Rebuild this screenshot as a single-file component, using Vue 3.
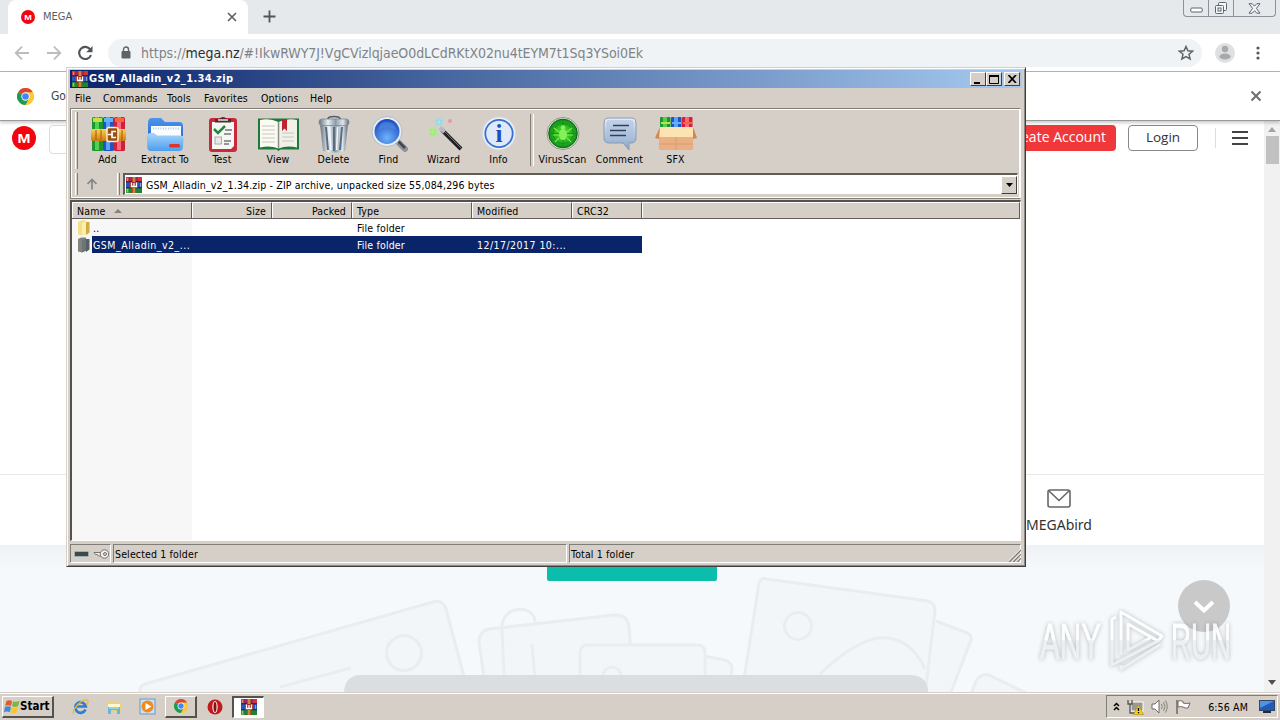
<template>
  <div class="desktop">
    <!-- Shared icon shapes -->
    <svg class="defs" width="0" height="0">
      <defs>
        <linearGradient id="steel" x1="0" x2="1" y1="0" y2="0">
          <stop offset="0" stop-color="#66727e" />
          <stop offset="0.3" stop-color="#e8eef3" />
          <stop offset="0.55" stop-color="#8c9dac" />
          <stop offset="0.8" stop-color="#dfe7ed" />
          <stop offset="1" stop-color="#5d6976" />
        </linearGradient>
        <linearGradient id="folderBlue" x1="0" x2="0" y1="0" y2="1">
          <stop offset="0" stop-color="#a9d6fb" />
          <stop offset="1" stop-color="#4d9eee" />
        </linearGradient>
        <linearGradient id="folderBack" x1="0" x2="0" y1="0" y2="1">
          <stop offset="0" stop-color="#4c96ee" />
          <stop offset="1" stop-color="#2f6fd2" />
        </linearGradient>
        <linearGradient id="gold" x1="0" x2="0" y1="0" y2="1">
          <stop offset="0" stop-color="#fbd34f" />
          <stop offset="1" stop-color="#d07a14" />
        </linearGradient>
        <radialGradient id="lens" cx="0.5" cy="0.75" r="0.75">
          <stop offset="0" stop-color="#6db4fa" />
          <stop offset="1" stop-color="#1c48bd" />
        </radialGradient>
        <radialGradient id="scan" cx="0.5" cy="0.5" r="0.55">
          <stop offset="0" stop-color="#58ee2e" />
          <stop offset="1" stop-color="#0b8617" />
        </radialGradient>
        <radialGradient id="sparkGreen">
          <stop offset="0" stop-color="#7be84a" />
          <stop offset="1" stop-color="#b9f0a1" stop-opacity="0" />
        </radialGradient>
        <radialGradient id="sparkCyan">
          <stop offset="0" stop-color="#4fcdec" />
          <stop offset="1" stop-color="#a9e5ee" stop-opacity="0" />
        </radialGradient>
        <linearGradient id="bubble" x1="0" x2="0" y1="0" y2="1">
          <stop offset="0" stop-color="#e4edf7" />
          <stop offset="1" stop-color="#86a2c6" />
        </linearGradient>
        <linearGradient id="mark" gradientUnits="userSpaceOnUse" x1="0" x2="0" y1="612" y2="672">
          <stop offset="0.46" stop-color="#fff" />
          <stop offset="0.48" stop-color="#eceff0" />
        </linearGradient>
      </defs>
      <symbol id="rar" viewBox="0 0 16 16">
        <rect x="0" y="0" width="16" height="5" fill="#9c2460" />
        <rect x="0" y="5" width="16" height="6" fill="#2b53bd" />
        <rect x="0" y="11" width="16" height="5" fill="#228233" />
        <rect x="0" y="0" width="3" height="5" fill="#c93b45" />
        <rect x="12" y="0" width="4" height="5" fill="#d72f35" />
        <rect x="0" y="11" width="3" height="5" fill="#45a046" />
        <path d="M0 4.800h16M0 10.800h16" stroke="#1c1e3b" stroke-width="1" />
        <path d="M1.500 1v3M1.500 12v3M14.500 6v4" stroke="#d9d4c5" stroke-width=".8" opacity=".7" />
        <rect x="6" y="0" width="4" height="16" fill="#a8551d" />
        <path d="M8 0v16" stroke="#d89a55" stroke-width="1.400" />
        <rect x="4" y="5" width="8" height="6" fill="#a02c26" />
        <path d="M5.500 5.500v4h5v-4M8 6v3.500" stroke="#fff" stroke-width="1.300" fill="none" />
      </symbol>
      <symbol id="chrome" viewBox="0 0 16 16">
        <circle cx="8" cy="8" r="8" fill="#fcc934" />
        <path d="M8 8L1.070 4A8 8 0 0 1 14.930 4z" fill="#dc4437" />
        <path d="M8 8L1.070 4A8 8 0 0 0 8 16l3.500-6z" fill="#1a9c57" />
        <path d="M14.930 4H8v4l3.500 2L8 16A8 8 0 0 0 14.930 4z" fill="#fcc934" />
        <circle cx="8" cy="8" r="3.900" fill="#fff" />
        <circle cx="8" cy="8" r="3.100" fill="#4285f4" />
      </symbol>
      <symbol id="mega" viewBox="0 0 24 24">
        <circle cx="12" cy="12" r="12" fill="#f2050c" />
        <text x="5.500" y="16.500" textLength="13" lengthAdjust="spacingAndGlyphs" font-family="Liberation Sans" font-weight="700" font-size="13" fill="#fff">M</text>
      </symbol>
    </svg>

    <!-- Browser -->
    <div class="browser">
      <div class="tab-strip">
        <div class="tab">
          <svg width="14" height="14"><use href="#mega" /></svg>
          <span class="tab-title">MEGA</span>
          <svg class="tab-close" width="10" height="10" viewBox="0 0 10 10"><path d="M1 1l8 8M9 1L1 9" stroke="#5f6368" stroke-width="1.700" /></svg>
        </div>
        <svg class="new-tab" width="13" height="13" viewBox="0 0 13 13"><path d="M6.500 .5v12M.5 6.500h12" stroke="#50555a" stroke-width="1.800" /></svg>
        <div class="win-controls">
          <span class="wc"><svg width="13" height="6" viewBox="0 0 13 6"><rect x=".8" y="1" width="11.400" height="4" rx="1" fill="#fff" stroke="#5a6672" /></svg></span>
          <span class="wc"><svg width="14" height="14" viewBox="0 0 14 14" fill="#f4f6f8" stroke="#5a6672"><rect x="4.500" y="1.500" width="8" height="8" rx="1" /><rect x="1.500" y="4.500" width="8" height="8" rx="1" /><rect x="4" y="7" width="3" height="3" /></svg></span>
          <span class="wc wide"><svg width="13" height="11" viewBox="0 0 13 11"><path d="M1 .7h3.200l2.300 2.500L8.800.7H12L8.400 5.400 12 10.200H8.800L6.500 7.700l-2.300 2.500H1l3.600-4.800z" fill="#f4f6f8" stroke="#5a6672" /></svg></span>
        </div>
      </div>

      <div class="nav-bar">
        <svg class="nav-icons" width="86" height="18" viewBox="0 0 86 18" fill="none">
          <path d="M15 9H2M8 2.700L1.700 9 8 15.300" stroke="#babcbe" stroke-width="1.800" />
          <path d="M33 9h13M40 2.700L46.300 9 40 15.300" stroke="#babcbe" stroke-width="1.800" />
          <path d="M76.300 5.500A6.100 6.100 0 1 0 77 11" stroke="#505458" stroke-width="2.100" />
          <path d="M78.500 2v6.300h-6.300z" fill="#505458" />
        </svg>
        <div class="omnibox">
          <svg width="10" height="13" viewBox="0 0 10 13"><rect x=".5" y="5" width="9" height="7.500" rx="1" fill="#5f6368" /><path d="M2.500 5V3.500a2.500 2.500 0 0 1 5 0V5" stroke="#5f6368" stroke-width="1.400" fill="none" /></svg>
          <span class="url">https://<b>mega.nz</b>/#!IkwRWY7J!VgCVizlqjaeO0dLCdRKtX02nu4tEYM7t1Sq3YSoi0Ek</span>
          <svg class="star" width="16" height="16" viewBox="0 0 16 16"><path d="M8 1.500l1.900 4.300 4.700.4-3.600 3.100 1.100 4.600L8 11.500l-4.100 2.400L5 9.300 1.400 6.200l4.700-.4z" fill="none" stroke="#5f6368" stroke-width="1.500" /></svg>
        </div>
        <svg class="avatar" width="20" height="20" viewBox="0 0 20 20"><circle cx="10" cy="10" r="10" fill="#dfe0e2" /><circle cx="10" cy="6" r="3.200" fill="#a7a9ab" /><ellipse cx="10" cy="13.500" rx="5.600" ry="3" fill="#a7a9ab" /></svg>
        <svg class="dots" width="4" height="14" viewBox="0 0 4 14" fill="#55595d"><circle cx="2" cy="2" r="1.600" /><circle cx="2" cy="7" r="1.600" /><circle cx="2" cy="12" r="1.600" /></svg>
      </div>

      <div class="info-bar">
        <svg width="17" height="17"><use href="#chrome" /></svg>
        <span class="info-text">Go</span>
        <svg class="info-close" width="12" height="12" viewBox="0 0 12 12"><path d="M1.500 1.500l9 9M10.500 1.500l-9 9" stroke="#6b6e71" stroke-width="2" /></svg>
      </div>

      <div class="viewport">
        <div class="page">
          <div class="page-head">
            <svg width="24" height="24"><use href="#mega" /></svg>
            <div class="search"></div>
            <div class="create">Create Account</div>
            <div class="login">Login</div>
            <div class="divider"></div>
            <svg class="burger" width="16" height="14" viewBox="0 0 16 14"><path d="M0 1h16M0 7h16M0 13h16" stroke="#444" stroke-width="1.800" /></svg>
          </div>
          <div class="products">
            <div class="product">
              <svg width="24" height="19" viewBox="0 0 24 19" fill="none" stroke="#666" stroke-width="1.600"><rect x="1" y="1" width="22" height="17" rx="2" /><path d="M2 2l10 9.500L22 2" /></svg>
              <span>MEGAbird</span>
            </div>
          </div>
          <div class="promo">
            <svg class="art" width="1264" height="147" viewBox="0 545 1264 147">
              <g fill="#f2f6f9" stroke="#e9edf0" stroke-width="3" stroke-linejoin="round">
                <path d="M140 700V690Q140 686 145 684L433 602Q443 599 446 609L468 692" />
                <circle cx="404" cy="653" r="17.500" />
                <path d="M280 687L351 668" fill="none" />
                <path d="M486 692L479 642Q479 631 489 629L614 615Q627 614 629 626L634 692" />
                <path d="M505 692L502 630C500 604 535 604 535 622M532 644L536 692" fill="none" />
                <path d="M704 656L725 660Q731 662 732 668L730 692H704" />
                <rect x="580" y="645" width="125" height="60" rx="7" />
                <circle cx="612" cy="676" r="9" />
                <path d="M936 621L967 633Q972 635 971 640L948 700H925" />
                <path d="M742 692L759 583Q761 577 767 579L928 601Q936 604 935 611L925 695" />
                <circle cx="798" cy="626" r="13.500" />
                <path d="M820 674Q862 634 888 638Q912 641 925 669" fill="none" />
                <path d="M970 697L976 681Q981 673 989 675L1032 696" />
              </g>
              <path d="M344 692Q345 675 361 675H911Q928 676 928 692z" fill="#dadee1" />
            </svg>
            <div class="cta"></div>
            <svg class="scroll-down" width="52" height="52" viewBox="0 0 52 52"><circle cx="26" cy="26" r="26" fill="#c9c9ca" /><path d="M17 22l9 8.500 9-8.500" fill="none" stroke="#fff" stroke-width="4" /></svg>
          </div>
        </div>
        <div class="scrollbar">
          <svg width="8" height="5" viewBox="0 0 8 5"><path d="M0 5l4-5 4 5z" fill="#a3a3a3" /></svg>
          <div class="thumb"></div>
          <svg class="down" width="8" height="5" viewBox="0 0 8 5"><path d="M0 0h8L4 5z" fill="#505050" /></svg>
        </div>
      </div>
    </div>

    <svg class="watermark" width="204" height="72" viewBox="1034 605 204 72">
      <g fill="url(#mark)" stroke="url(#mark)" stroke-width="1">
        <text x="1040" y="659" textLength="61" lengthAdjust="spacingAndGlyphs" class="wm">ANY</text>
        <text x="1171" y="659" textLength="60" lengthAdjust="spacingAndGlyphs" class="wm">RUN</text>
      </g>
      <g fill="none" stroke="url(#mark)" stroke-width="3" stroke-linejoin="round">
        <path d="M1121 655V612L1162 636L1158 641L1128 624V650L1150 638" />
        <path d="M1116 617L1112 619V665L1158 641M1121 665V669L1161 644" />
      </g>
    </svg>

    <!-- Archive window -->
    <div class="window">
      <div class="title-bar">
        <svg width="16" height="16"><use href="#rar" /></svg>
        <span class="title">GSM_Alladin_v2_1.34.zip</span>
        <span class="cap"><svg width="10" height="9" viewBox="0 0 10 9"><path d="M1 8h6" stroke="#000" stroke-width="2" /></svg></span>
        <span class="cap"><svg width="10" height="9" viewBox="0 0 10 9"><path d="M.5 1v7.500h9V1" stroke="#000" fill="none" /><path d="M0 1h10" stroke="#000" stroke-width="2" /></svg></span>
        <span class="cap close"><svg width="9" height="8" viewBox="0 0 9 8"><path d="M.5 0l7.500 8M8 0L.5 8" stroke="#000" stroke-width="1.700" /></svg></span>
      </div>
      <div class="menu">
        <span v-for="m in menu" :key="m.label" :style="{ width: m.width + 'px' }">{{ m.label }}</span>
      </div>

      <div class="rebar">
        <div class="toolbar">
          <i class="grip"></i>
          <div v-for="t in tools" :key="t.label" class="tool" :class="{ split: t.split }" :style="{ width: t.width + 'px' }">
            <svg width="44" height="38" viewBox="0 0 44 38">
              <g v-if="t.label === 'Add'">
                <g v-for="b in books" :key="b.x">
                  <rect :x="b.x" y="2" width="11" height="34" rx="1.500" :fill="b.dark" />
                  <rect :x="b.x + 3" y="2" width="4" height="33" :fill="b.light" />
                  <rect :x="b.x + 1" y="3" width="9" height="4" :fill="b.top" />
                </g>
                <rect x="5" y="14" width="35" height="12" rx="2" fill="url(#gold)" />
                <path d="M10 15v10M15 15v10M36 15v10" stroke="#a5590d" />
                <rect x="21" y="12.500" width="11" height="14" rx="2" fill="#9b4f13" stroke="#fff0cf" stroke-width="1.500" />
                <path d="M30 16.500h-4v6h4M22 19.500h5" fill="none" stroke="#fff" stroke-width="1.600" />
              </g>
              <g v-else-if="t.label === 'Extract To'">
                <path d="M5 8Q5 3 9 3h9l4 4h14q4 0 4 4v10H5z" fill="url(#folderBack)" />
                <path d="M8 11h30v12H8z" fill="#fafdff" />
                <path d="M10 13.500h26" stroke="#b4cbe0" stroke-width="2" stroke-dasharray="1 1.500" />
                <path d="M4 22q0-4 4-4h3l3 2.500h23q4 0 3.500 4L40 32q-.3 4-4 4H8q-3.500 0-3.800-4z" fill="url(#folderBlue)" />
                <rect x="26" y="29" width="11" height="3.500" rx="1.500" fill="#d9372b" />
              </g>
              <g v-else-if="t.label === 'Test'">
                <rect x="9" y="3" width="28" height="34" rx="3" fill="#c9293c" />
                <path d="M12 7h22v24l-3 3H12z" fill="#f6f6f4" />
                <path d="M15 7.500V4h4q4-4 8 0h4v3.500z" fill="#4c2d31" />
                <path d="M18 5h10" stroke="#eadfe0" stroke-width="1.500" />
                <path d="M14 14l4 4 7-7" fill="none" stroke="#1f8a3b" stroke-width="2.500" />
                <path d="M25 15h7M24 19h7M24 26h7M24 29h5" stroke="#777" stroke-width="1.300" />
                <rect x="15" y="22" width="6.500" height="7" fill="#e9e9e7" stroke="#999" stroke-width=".8" />
              </g>
              <g v-else-if="t.label === 'View'">
                <path d="M2 3.500h41v31H24.500l-2 1.500-2-1.500H2z" fill="#1d7a3c" />
                <path d="M4 5q10-2 18.500 2v26.500q-8.500-3.500-18.500-1z" fill="#fbfbf3" />
                <path d="M41 5q-10-2-18.500 2v26.500q8.500-3.500 18.500-1z" fill="#f1f1e8" />
                <path d="M22.500 7v26.500" stroke="#8b8f86" stroke-width="1.500" />
                <path d="M6 11h13M6 15h13M6 19h13M6 23h13M6 27h13M26 18h12M26 22h12M26 26h12" stroke="#c5c6c0" />
                <path d="M26 4h5v12l-2.500-2.500L26 16z" fill="#bd2430" />
              </g>
              <g v-else-if="t.label === 'Delete'">
                <path d="M8 9h28l-3 27q-11 3-22 0z" fill="url(#steel)" />
                <path d="M14 12l2 23M22 12v24M30 12l-2 23" stroke="#5b6c80" stroke-width="2" />
                <path d="M17.500 12l1.500 23M25.500 12l-.8 23" stroke="#f5f8fa" stroke-width="1.500" />
                <rect x="7" y="4" width="30" height="6.500" rx="3" fill="url(#steel)" stroke="#7e8a96" stroke-width=".8" />
                <path d="M16 4q0-2.500 6-2.500T28 4" fill="none" stroke="#535f6b" stroke-width="1.500" />
              </g>
              <g v-else-if="t.label === 'Find'">
                <path d="M29 25l9 9" stroke="#8d9298" stroke-width="6" stroke-linecap="round" />
                <path d="M31 26l7 7" stroke="#42474e" stroke-width="2.500" />
                <circle cx="20" cy="16.500" r="15" fill="#e9edf4" stroke="#a6b2c3" stroke-width=".8" />
                <circle cx="20" cy="16.500" r="12.500" fill="url(#lens)" />
                <path d="M11 15q2-9 9-8 8 0 9 8-9-5-18 0z" fill="#5188e1" opacity=".6" />
              </g>
              <g v-else-if="t.label === 'Wizard'">
                <path d="M20 15L39 34" stroke="#1f2024" stroke-width="4" />
                <path d="M20 14l19 19" stroke="#77777d" stroke-width="1" />
                <path d="M18 12.500l4.500 4.500" stroke="#b9b9bf" stroke-width="4" />
                <circle cx="11" cy="17" r="6.500" fill="url(#sparkGreen)" />
                <path d="M11 12l1 4 4 1-4 1-1 4-1-4-4-1 4-1z" fill="#a5f57c" />
                <circle cx="17" cy="7" r="5.500" fill="url(#sparkCyan)" />
                <path d="M17 3l.8 3.200L21 7l-3.200.8L17 11l-.8-3.200L13 7l3.200-.8z" fill="#9feafa" />
                <circle cx="28" cy="6" r="2" fill="#ec8198" opacity=".7" />
              </g>
              <g v-else-if="t.label === 'Info'">
                <circle cx="22" cy="18.500" r="16.500" fill="#edf1f7" stroke="#d3dae5" />
                <circle cx="22" cy="18.500" r="13.700" fill="#dfe9fa" stroke="#3870cf" stroke-width="1.800" />
                <text x="22" y="27" text-anchor="middle" class="info-i">i</text>
              </g>
              <g v-else-if="t.label === 'VirusScan'">
                <circle cx="22" cy="18.500" r="16" fill="#dfe5dc" stroke="#8b9b88" />
                <circle cx="22" cy="18.500" r="14.300" fill="url(#scan)" stroke="#0b6314" />
                <path d="M22 4v29M8 18.500h28" stroke="#0d8b1a" stroke-width=".8" />
                <circle cx="22" cy="18.500" r="10" fill="none" stroke="#0d8b1a" stroke-width=".8" />
                <ellipse cx="22" cy="19.500" rx="4" ry="5.500" fill="#85f05c" />
                <circle cx="22" cy="12.500" r="2.300" fill="#85f05c" />
                <path d="M18 17l-5-4M18 20h-6M18 23l-4 4M26 17l5-4M26 20h6M26 23l4 4" stroke="#7bea52" stroke-width="1.100" />
              </g>
              <g v-else-if="t.label === 'Comment'">
                <path d="M11 3h22q5 0 5 5v15q0 5-5 5h-2v7l-6-7H11q-5 0-5-5V8q0-5 5-5z" fill="url(#bubble)" stroke="#8a9cb6" />
                <rect x="8.500" y="5" width="27" height="20.500" rx="3" fill="#a9bedb" opacity=".55" />
                <path d="M15 10.500h16M12 15.500h16M12 20.500h16" stroke="#30405c" stroke-width="1.600" />
              </g>
              <g v-else>
                <g v-for="b in books" :key="b.x">
                  <rect :x="b.x" y="2" width="10.500" height="15" rx="1" :fill="b.dark" />
                  <rect :x="b.x + 3" y="2" width="4" height="15" :fill="b.light" />
                  <rect :x="b.x + 1" y="7" width="9" height="2" :fill="b.top" />
                </g>
                <path d="M5 20h34v15H5z" fill="#eaaf82" />
                <path d="M6 12h33l1 10H4z" fill="#fbe3b4" />
                <path d="M6 12L1 23l4 1zM39 12l4 11-4 1z" fill="#d38650" />
                <path d="M22 22v13M5 29h34" stroke="#d59a6d" stroke-width=".8" />
              </g>
            </svg>
            <span>{{ t.label }}</span>
          </div>
        </div>
        <div class="address-band">
          <i class="grip"></i>
          <svg class="up" width="12" height="12" viewBox="0 0 12 12"><path d="M6 11.500V1.500M1.500 6L6 1.500 10.500 6" fill="none" stroke="#858585" stroke-width="1.700" /></svg>
          <i class="grip"></i>
          <div class="combo">
            <svg width="16" height="16"><use href="#rar" /></svg>
            <span class="path">GSM_Alladin_v2_1.34.zip - ZIP archive, unpacked size 55,084,296 bytes</span>
            <span class="drop"><svg width="7" height="4" viewBox="0 0 7 4"><path d="M0 0h7L3.500 4z" fill="#000" /></svg></span>
          </div>
        </div>
      </div>

      <div class="list">
        <div class="row head">
          <span class="c-name">Name<svg width="8" height="4" viewBox="0 0 8 4"><path d="M0 4l4-4 4 4z" fill="#85817b" /></svg></span>
          <span class="c-size">Size</span>
          <span class="c-size">Packed</span>
          <span class="c-type">Type</span>
          <span class="c-mod">Modified</span>
          <span class="c-crc">CRC32</span>
          <span class="c-rest"></span>
        </div>
        <div class="rows">
          <div v-for="r in rows" :key="r.name" class="row" :class="{ selected: r.selected }">
            <svg width="14" height="16" viewBox="0 0 14 16">
              <path d="M1 2l3-1.500h5V14l-4 1.500-4-1z" :fill="r.selected ? '#7f8481' : '#f3df86'" />
              <path d="M9 2h3.500v10.500L9 15z" :fill="r.selected ? '#566062' : '#cfae3d'" />
              <path d="M5 3l4-1.500V13l-4 2.500z" :fill="r.selected ? '#6c7474' : '#fbeeb0'" />
            </svg>
            <div class="cells">
              <span class="c-first">{{ r.name }}</span>
              <span class="c-type">{{ r.type }}</span>
              <span class="c-mod">{{ r.modified }}</span>
            </div>
          </div>
        </div>
      </div>

      <div class="status">
        <div class="pane icons">
          <svg width="15" height="6" viewBox="0 0 15 6"><rect x=".5" y=".5" width="14" height="5" rx="1" fill="#3e4a4a" stroke="#9fb0b4" /></svg>
          <svg width="17" height="10" viewBox="0 0 17 10"><path d="M8 3.500H1l1.500 2h2l1 1.500H8" fill="#eee" stroke="#77736f" /><circle cx="11.500" cy="5" r="4.200" fill="#f1efec" stroke="#77736f" /><circle cx="12" cy="5" r="1.500" fill="#d4d0c8" stroke="#77736f" /></svg>
        </div>
        <div class="pane left">Selected 1 folder</div>
        <div class="pane right">Total 1 folder</div>
        <svg class="size-grip" width="13" height="13" viewBox="0 0 13 13"><path d="M1 13L13 1M5 13l8-8M9 13l4-4" stroke="#807c76" stroke-width="1.500" /><path d="M0 12.500L12.500 0M4 12.500L13 4M8 12.500L13 8" stroke="#fff" stroke-width=".8" /></svg>
      </div>
    </div>

    <!-- Taskbar -->
    <div class="taskbar">
      <div class="start">
        <svg width="16" height="15" viewBox="0 0 16 15">
          <path d="M2.500 2Q5 .5 8 2L7 7Q4 5.500 1.200 7z" fill="#e2592a" />
          <path d="M9 2.300q3 1.200 6.500-.3L14 7.300q-3 1.200-6 0z" fill="#7db543" />
          <path d="M1 8q3-1.500 6 0l-1.200 5Q3 11.800 0 13z" fill="#4289cf" />
          <path d="M7.800 8.300q3 1.200 6 0L12.500 13.500q-3 1.200-6 0z" fill="#f7c52e" />
        </svg>
        <b>Start</b>
      </div>
      <div class="task">
        <svg width="17" height="17" viewBox="0 0 17 17"><path d="M13.500 11.500A5.300 5.300 0 1 1 13.800 8.500H5" fill="none" stroke="#2a7fd6" stroke-width="2.700" /><path d="M2 15.500Q-.5 14 5 7.500T15.500 2q1.500 1.500-1 5" fill="none" stroke="#e9b93a" stroke-width="1.300" /></svg>
      </div>
      <div class="task">
        <svg width="16" height="16" viewBox="0 0 16 16"><path d="M1 2h5l1.500 1.500H15V13H1z" fill="#edd271" /><path d="M2 5h12v3H2z" fill="#fff7cd" /><path d="M2 8h12v7h-3v-4H5v4H2z" fill="#65b7df" /><path d="M3 9h10" stroke="#c8ecfa" /></svg>
      </div>
      <div class="task">
        <svg width="17" height="17" viewBox="0 0 17 17"><rect x="1" y="1" width="15" height="15" fill="#c9e0f2" stroke="#699bc8" /><circle cx="8.500" cy="8.500" r="6" fill="#f48a1c" /><path d="M6.500 5l6 3.500-6 3.500z" fill="#fff" /></svg>
      </div>
      <div class="task raised"><svg width="14" height="14"><use href="#chrome" /></svg></div>
      <div class="task">
        <svg width="16" height="16" viewBox="0 0 16 16"><circle cx="8" cy="8" r="7.500" fill="#c01a1f" /><ellipse cx="8" cy="8" rx="2.700" ry="6" fill="#f6e8e4" /><ellipse cx="8" cy="8" rx="1.500" ry="5" fill="#8d0f14" /></svg>
      </div>
      <div class="task pressed"><svg width="16" height="16"><use href="#rar" /></svg></div>

      <div class="tray">
        <svg width="7" height="9" viewBox="0 0 7 9"><path d="M1 4l2.500-2.500L6 4M1 8l2.500-2.500L6 8" fill="none" stroke="#000" stroke-width="1.500" /></svg>
        <svg width="17" height="16" viewBox="0 0 17 16"><rect x="4" y="3" width="12" height="9" fill="#9b9a92" stroke="#fff" /><path d="M1 1v4h4V1M3 5v9h5" fill="none" stroke="#555" stroke-width="1.300" /><path d="M11.500 6l5 9.500h-10z" fill="#f8ce19" stroke="#b38b00" stroke-width=".6" /><path d="M11.500 9v3M11.500 13v1.300" stroke="#000" stroke-width="1.300" /></svg>
        <svg width="17" height="15" viewBox="0 0 17 15" fill="none"><path d="M1 5h3l4-4v13l-4-4H1z" fill="#fff" stroke="#6d6964" /><path d="M10.500 5q1.500 2.500 0 5M12.500 3q3 4.500 0 9M14.500 1.500q3.500 6 0 12" stroke="#84807a" /></svg>
        <svg width="17" height="15" viewBox="0 0 17 15"><path d="M2 1v14" stroke="#6d6964" stroke-width="1.500" /><path d="M3 2q3-1 5 .5v1.500q3 1 7 0l-2 5q-3 .5-5-1-2.500-.8-5 0z" fill="#fff" stroke="#6d6964" /></svg>
        <span class="clock">6:56 AM</span>
        <svg width="16" height="13" viewBox="0 0 16 13"><rect x=".5" y=".5" width="15" height="10" fill="#1d5cbb" stroke="#33455f" /><path d="M1 1h14L1 8z" fill="#6aa9ef" opacity=".7" /><path d="M4 12h8" stroke="#1e2b40" stroke-width="2" /></svg>
      </div>
    </div>
  </div>
</template>

<script setup>
const menu = [
  { label: 'File', width: 28 },
  { label: 'Commands', width: 64 },
  { label: 'Tools', width: 37 },
  { label: 'Favorites', width: 57 },
  { label: 'Options', width: 49 },
  { label: 'Help', width: 30 }
]

const tools = [
  { label: 'Add', width: 57 },
  { label: 'Extract To', width: 58 },
  { label: 'Test', width: 56 },
  { label: 'View', width: 56 },
  { label: 'Delete', width: 55 },
  { label: 'Find', width: 55 },
  { label: 'Wizard', width: 55 },
  { label: 'Info', width: 55 },
  { label: 'VirusScan', width: 57, split: true },
  { label: 'Comment', width: 57 },
  { label: 'SFX', width: 55 }
]

const books = [
  { x: 6, dark: '#1d9630', light: '#50d055', top: '#c8de3d' },
  { x: 17, dark: '#1f55c4', light: '#5ba2f2', top: '#5fb5f5' },
  { x: 28, dark: '#d2203a', light: '#f76a7b', top: '#f0693a' }
]

const rows = [
  { name: '..', type: 'File folder', modified: '', selected: false },
  { name: 'GSM_Alladin_v2_...', type: 'File folder', modified: '12/17/2017 10:...', selected: true }
]
</script>

<style>
body {
  margin: 0;
  overflow: hidden;
}
</style>

<style scoped>
.desktop {
  position: relative;
  width: 1280px;
  height: 720px;
  overflow: hidden;
  display: flex;
  flex-direction: column;
  background: #fff;
  font-family: 'DejaVu Sans Condensed', 'DejaVu Sans', sans-serif;
  font-stretch: condensed;
  font-size: 10.5px;
  line-height: 14px;
  letter-spacing: 0.15px;
  color: #000;
  white-space: nowrap;
}

.desktop * {
  box-sizing: border-box;
}

svg {
  display: block;
  flex-shrink: 0;
}

.defs {
  position: absolute;
}

/* Browser */
.browser {
  height: 692px;
  display: flex;
  flex-direction: column;
  letter-spacing: 0;
}

.tab-strip {
  height: 34px;
  background: #e5e9ec;
  display: flex;
  align-items: flex-start;
  padding-left: 8px;
}

.tab {
  width: 240px;
  height: 34px;
  padding: 0 11px 0 13px;
  background: #fff;
  border-radius: 8px 8px 0 0;
  display: flex;
  align-items: center;
}

.tab-title {
  flex: 1;
  margin-left: 8px;
  font-size: 11px;
  color: #5a5d61;
}

.new-tab {
  margin: 10px 0 0 15px;
}

.win-controls {
  display: flex;
  margin: 0 4px 0 auto;
  height: 17px;
  border: 1px solid #8b9299;
  border-top: 0;
  border-radius: 0 0 4px 4px;
}

.wc {
  width: 25px;
  display: flex;
  align-items: center;
  justify-content: center;
  border-right: 1px solid #8b9299;
}

.wc:first-child svg {
  margin-top: 4px;
}

.wc.wide {
  width: 41px;
  border-right: 0;
}

.nav-bar {
  height: 38px;
  display: flex;
  align-items: center;
  padding: 0 20px 0 14px;
  border-bottom: 1px solid #b2b4b6;
}

.omnibox {
  width: 1095px;
  height: 28px;
  margin-left: 8px;
  padding: 0 8px 0 13px;
  border-radius: 14px;
  background: #f0f3f5;
  display: flex;
  align-items: center;
}

.url {
  flex: 1;
  margin-left: 10px;
  font-size: 14px;
  line-height: 20px;
  letter-spacing: -0.07px;
  color: #7f8387;
}

.url b {
  font-weight: 400;
  color: #2b2e31;
}

.avatar {
  margin-left: 13px;
}

.dots {
  margin-left: 21px;
}

.info-bar {
  height: 49px;
  position: relative;
  display: flex;
  align-items: center;
  padding: 0 18px 0 17px;
  background: #fff;
  border-bottom: 1px solid #97999b;
  box-shadow: 0 2px 3px rgba(0, 0, 0, 0.2);
}

.info-text {
  flex: 1;
  margin-left: 17px;
  font-size: 12px;
  color: #444;
}

.viewport {
  flex: 1;
  display: flex;
}

.page {
  width: 1264px;
  display: flex;
  flex-direction: column;
}

.page-head {
  height: 353px;
  padding: 4px 16px 0 12px;
  display: flex;
  align-items: flex-start;
  font-family: 'Open Sans', sans-serif;
  font-stretch: normal;
  font-size: 14px;
}

.page-head > svg:first-child {
  margin-top: 1px;
}

.search {
  width: 300px;
  height: 29px;
  margin-left: 13px;
  border: 1px solid #dcdcdc;
  border-radius: 4px;
}

.create {
  width: 118px;
  height: 26px;
  margin-left: auto;
  padding-right: 10px;
  border-radius: 4px;
  background: #f0373a;
  color: #fff;
  line-height: 24px;
  text-align: right;
}

.login {
  width: 70px;
  height: 26px;
  margin-left: 12px;
  border: 1px solid #888;
  border-radius: 4px;
  color: #333;
  font-size: 13.5px;
  line-height: 23px;
  text-align: center;
}

.divider {
  width: 1px;
  height: 20px;
  margin: 3px 0 0 17px;
  background: #ddd;
}

.burger {
  margin: 6px 0 0 16px;
}

.products {
  height: 71px;
  border-top: 1px solid #e8e8e8;
  display: flex;
}

.product {
  width: 90px;
  margin-left: 1014px;
  padding-top: 14px;
  display: flex;
  flex-direction: column;
  align-items: center;
  gap: 6px;
  font-family: 'Noto Sans', sans-serif;
  font-stretch: normal;
  font-size: 14px;
  line-height: 22px;
  color: #333;
}

.promo {
  position: relative;
  flex: 1;
  background: linear-gradient(#eff2f5, #f6f9fc 24px);
}

.cta {
  width: 170px;
  height: 36px;
  position: absolute;
  left: 547px;
  top: 0;
  border-radius: 2px;
  background: #0dbdab;
}

.scroll-down {
  position: absolute;
  right: 34px;
  top: 35px;
}

.scrollbar {
  width: 16px;
  padding: 6px 0 7px;
  background: #f1f1f1;
  display: flex;
  flex-direction: column;
  align-items: center;
}

.thumb {
  width: 13px;
  height: 28px;
  margin-top: 4px;
  background: #c1c1c1;
}

.scrollbar .down {
  margin-top: auto;
}

.watermark {
  position: absolute;
  left: 1034px;
  top: 605px;
  opacity: 0.85;
  filter: drop-shadow(0 0 2px rgba(90, 95, 100, 0.5));
}

.wm {
  font-family: 'Liberation Sans Narrow', 'Liberation Sans', sans-serif;
  font-size: 50px;
  letter-spacing: 0;
}

/* Archive window */
.window {
  position: absolute;
  left: 66px;
  top: 67px;
  width: 960px;
  height: 500px;
  padding: 1px 3px 3px 2px;
  display: flex;
  flex-direction: column;
  background: #d5cfc7;
  border: 1px solid #d5cfc7;
  border-right-color: #404040;
  border-bottom-color: #404040;
  box-shadow: inset 1px 1px #fff, inset -1px -1px #8b8781;
}

.title-bar {
  height: 18px;
  margin: 1px 0 0 1px;
  padding: 0 2px 0 2px;
  display: flex;
  align-items: center;
  background: linear-gradient(90deg, #0a246a, #a6caf0);
}

.title {
  flex: 1;
  margin-left: 1px;
  font-size: 11px;
  font-weight: 700;
  letter-spacing: 0.35px;
  color: #fff;
}

.cap {
  width: 16px;
  height: 14px;
  display: flex;
  align-items: center;
  justify-content: center;
  background: #d5cfc7;
  border: 1px solid #fff;
  border-right-color: #404040;
  border-bottom-color: #404040;
}

.cap.close {
  margin-left: 2px;
}

.menu {
  height: 20px;
  padding-left: 6px;
  display: flex;
  align-items: center;
}

.rebar {
  height: 91px;
  margin: 0 1px;
  border: 1px solid #807c76;
  border-right-color: #fff;
  border-bottom-color: #807c76;
  box-shadow: inset 1px 1px #fff, inset -1px -1px #fff;
  padding: 3px 2px 0 4px;
}

.grip {
  width: 3px;
  flex-shrink: 0;
  align-self: stretch;
  border-left: 1px solid #fff;
  border-right: 1px solid #807c76;
}

.toolbar {
  height: 57px;
  display: flex;
}

.tool {
  padding-top: 3px;
  display: flex;
  flex-direction: column;
  align-items: center;
  line-height: 13px;
}

.grip + .tool {
  margin-left: 1px;
}

.tool.split {
  margin-left: 8px;
  position: relative;
}

.tool.split::before {
  content: '';
  position: absolute;
  left: -4px;
  top: 2px;
  bottom: 3px;
  width: 2px;
  border-left: 1px solid #807c76;
  border-right: 1px solid #fff;
}

.address-band {
  height: 22px;
  margin-top: 4px;
  display: flex;
  align-items: center;
}

.up {
  margin: 0 19px 0 8px;
}

.combo {
  flex: 1;
  height: 22px;
  margin-left: 3px;
  padding-left: 1px;
  display: flex;
  align-items: center;
  background: #fff;
  border: 2px solid #605c58;
  border-right: 1px solid #fff;
  border-bottom: 1px solid #d5cfc7;
}

.path {
  flex: 1;
  margin-left: 4px;
}

.drop {
  width: 16px;
  height: 18px;
  display: flex;
  align-items: center;
  justify-content: center;
  background: #d5cfc7;
  border: 1px solid #fff;
  border-right-color: #404040;
  border-bottom-color: #404040;
}

.list {
  flex: 1;
  margin: 1px 1px 0;
  display: flex;
  flex-direction: column;
  background: linear-gradient(90deg, #f7f7f7 120px, #fff 120px);
  border: 2px solid #55514d;
  border-right: 1px solid #fff;
  border-bottom: 1px solid #fff;
}

.row {
  height: 17px;
  display: flex;
  align-items: center;
}

.row > svg {
  margin: 0 1px 0 5px;
}

.cells {
  width: 550px;
  height: 17px;
  display: flex;
  align-items: center;
}

.selected .cells {
  background: #0a246a;
  color: #fff;
}

.selected .c-first {
  letter-spacing: 0.5px;
}

.selected .c-mod {
  letter-spacing: 0.45px;
}

.c-first {
  width: 260px;
  padding-left: 1px;
}

.c-size {
  width: 80px;
  text-align: right;
}

.c-name {
  width: 120px;
}

.c-name svg {
  display: inline-block;
  margin-left: 9px;
  vertical-align: 2px;
}

.c-type {
  width: 120px;
  padding-left: 5px;
}

.c-mod {
  width: 100px;
  padding-left: 5px;
}

.c-crc {
  width: 70px;
}

.c-rest {
  flex: 1;
}

.head span {
  height: 17px;
  padding: 1px 5px 0 5px;
  background: #d5cfc7;
  border-top: 1px solid #fff;
  border-bottom: 1px solid #605c58;
  border-right: 1px solid #605c58;
  box-shadow: inset 1px 0 #fff;
}

.status {
  height: 19px;
  margin: 3px 1px 0;
  position: relative;
  display: flex;
  gap: 2px;
}

.pane {
  height: 19px;
  padding-left: 1px;
  line-height: 19px;
  border: 1px solid #807c76;
  border-right-color: #fff;
  border-bottom-color: #fff;
}

.pane.icons {
  width: 41px;
  padding-left: 3px;
  display: flex;
  align-items: center;
  gap: 4px;
}

.pane.left {
  width: 454px;
}

.pane.right {
  flex: 1;
}

.size-grip {
  position: absolute;
  right: 0;
  bottom: 1px;
}

.info-i {
  font-family: 'Liberation Serif', serif;
  font-weight: 700;
  font-size: 25px;
  fill: #1d4fb8;
}

/* Taskbar */
.taskbar {
  height: 28px;
  padding: 2px 2px 1px;
  display: flex;
  align-items: center;
  background: #d5cfc7;
  box-shadow: inset 0 1px #d5cfc7, inset 0 2px #fff;
}

.start {
  width: 52px;
  height: 22px;
  margin-right: 10px;
  padding-left: 1px;
  display: flex;
  align-items: center;
  font-size: 11.5px;
  letter-spacing: 0;
  border: 1px solid #fff;
  border-right: 2px solid #55514d;
  border-bottom: 2px solid #55514d;
}

.task {
  width: 32px;
  height: 22px;
  margin-right: 1.7px;
  display: flex;
  align-items: center;
  justify-content: center;
}

.task.raised {
  border: 1px solid #fff;
  border-right: 2px solid #55514d;
  border-bottom: 2px solid #55514d;
}

.task.pressed {
  background: #fff;
  border: 2px solid #55514d;
  border-right: 1px solid #fff;
  border-bottom: 1px solid #fff;
}

.tray {
  width: 172px;
  height: 23px;
  margin-left: auto;
  padding: 0 2px 0 6px;
  display: flex;
  align-items: center;
  border: 1px solid #807c76;
  border-right-color: #fff;
  border-bottom-color: #fff;
}

.tray svg {
  margin-right: 7px;
}

.clock {
  margin: 0 11px 0 auto;
}

.tray svg:last-child {
  margin-right: 0;
}
</style>
